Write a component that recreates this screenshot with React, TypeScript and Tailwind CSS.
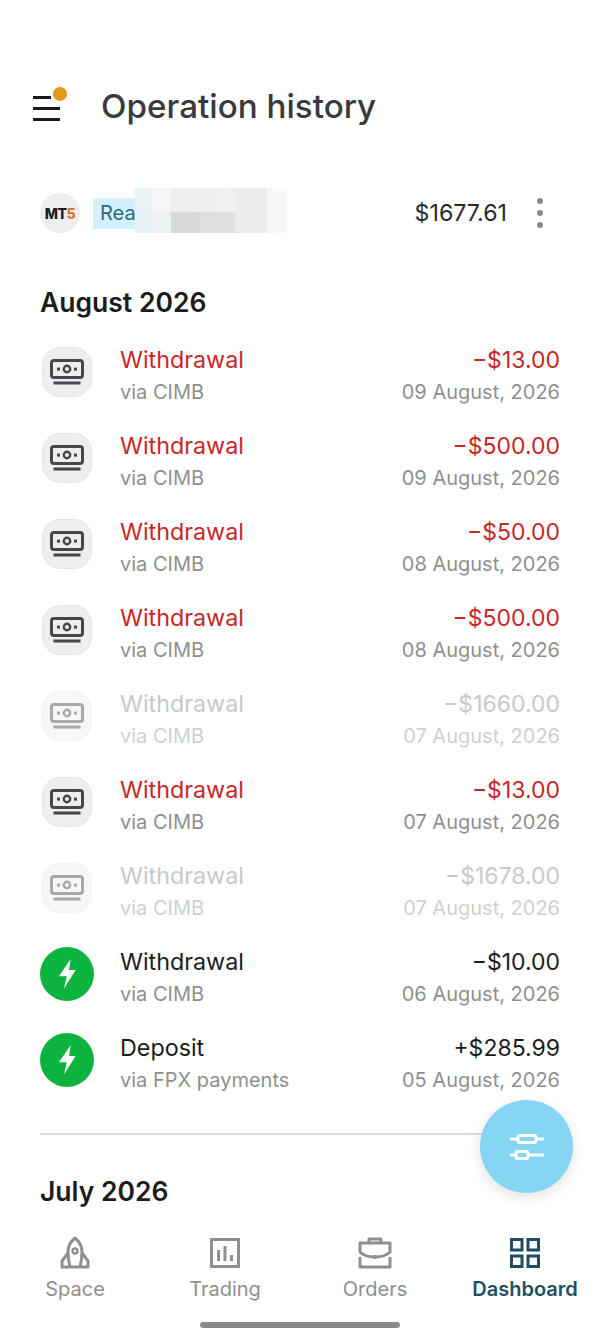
const ops = [
  { title: 'Withdrawal', via: 'via CIMB', amount: '−$13.00', date: '09 August, 2026', kind: 'failed' },
  { title: 'Withdrawal', via: 'via CIMB', amount: '−$500.00', date: '09 August, 2026', kind: 'failed' },
  { title: 'Withdrawal', via: 'via CIMB', amount: '−$50.00', date: '08 August, 2026', kind: 'failed' },
  { title: 'Withdrawal', via: 'via CIMB', amount: '−$500.00', date: '08 August, 2026', kind: 'failed' },
  { title: 'Withdrawal', via: 'via CIMB', amount: '−$1660.00', date: '07 August, 2026', kind: 'pending' },
  { title: 'Withdrawal', via: 'via CIMB', amount: '−$13.00', date: '07 August, 2026', kind: 'failed' },
  { title: 'Withdrawal', via: 'via CIMB', amount: '−$1678.00', date: '07 August, 2026', kind: 'pending' },
  { title: 'Withdrawal', via: 'via CIMB', amount: '−$10.00', date: '06 August, 2026', kind: 'done' },
  { title: 'Deposit', via: 'via FPX payments', amount: '+$285.99', date: '05 August, 2026', kind: 'done' },
]

// mosaic left over from the blurred account number
const blurTop = [
  { w: 'w-[16px]', c: 'bg-[#e8f3f8]' },
  { w: 'w-[20px]', c: 'bg-[#f3f5f6]' },
  { w: 'w-[46px]', c: 'bg-[#eeeeef]' },
  { w: 'w-[18px]', c: 'bg-[#f0f0f0]' },
  { w: 'w-[32px]', c: 'bg-[#ececec]' },
  { w: 'w-[20px]', c: 'bg-[#f8f8f8]' },
]
const blurBottom = [
  { w: 'w-[16px]', c: 'bg-[#e6f1f6]' },
  { w: 'w-[20px]', c: 'bg-[#eef1f2]' },
  { w: 'w-[28px]', c: 'bg-[#d9d9d9]' },
  { w: 'w-[18px]', c: 'bg-[#dedede]' },
  { w: 'w-[18px]', c: 'bg-[#e0e0e0]' },
  { w: 'w-[32px]', c: 'bg-[#ececec]' },
  { w: 'w-[20px]', c: 'bg-[#f8f8f8]' },
]

function CashIcon({ className }: { className: string }) {
  return (
    <svg viewBox="0 0 34 26" className={className} fill="none">
      <rect x="1.5" y="1.5" width="31" height="17" rx="2.5" stroke="currentColor" strokeWidth="3" />
      <circle cx="17" cy="10" r="3.2" stroke="currentColor" strokeWidth="2.4" />
      <rect x="7" y="8.6" width="3" height="3" fill="currentColor" />
      <rect x="24" y="8.6" width="3" height="3" fill="currentColor" />
      <rect x="3.5" y="22.5" width="27" height="3" fill="currentColor" />
    </svg>
  )
}

function OpRow({ op }: { op: (typeof ops)[number] }) {
  const pending = op.kind === 'pending'
  const titleColor = op.kind === 'failed' ? 'text-[#c62828]' : pending ? 'text-[#c9c9c9]' : 'text-[#1c1c1c]'
  const subColor = pending ? 'text-[#d0d0d0]' : 'text-[#8f8f8f]'
  return (
    <div className="flex h-[86px] items-start pt-[4px]">
      <div className="flex w-[80px] shrink-0">
        {op.kind === 'done' ? (
          <div className="mt-[1px] flex h-[54px] w-[54px] items-center justify-center rounded-full bg-[#0cb33f]">
            <svg viewBox="0 0 17 30" className="h-[30px] w-[17px]" fill="#fff">
              <path d="M11.7 0 0 17.3H7.7L5 29.5 16.7 11H10Z" />
            </svg>
          </div>
        ) : (
          <div
            className={`ml-[2px] mt-[3px] flex h-[50px] w-[50px] items-center justify-center rounded-[18px] border ${
              pending ? 'border-[#f3f3f4] bg-[#f7f7f8] text-[#a9a9a9]' : 'border-[#e6e6e9] bg-[#eeeef0] text-[#45474b]'
            }`}
          >
            <CashIcon className="h-[26px] w-[34px] shrink-0" />
          </div>
        )}
      </div>
      <div className="flex-1">
        <div className={`text-[23.3px] leading-[32px] ${titleColor}`}>{op.title}</div>
        <div className={`text-[20px] leading-[33px] ${subColor}`}>{op.via}</div>
      </div>
      <div className="text-right">
        <div className={`text-[23px] leading-[32px] ${titleColor}`}>{op.amount}</div>
        <div className={`text-[20px] leading-[33px] ${subColor}`}>{op.date}</div>
      </div>
    </div>
  )
}

function NavItem({ label, active, children }: { label: string; active?: boolean; children: React.ReactNode }) {
  return (
    <div className={`flex w-[150px] flex-col items-center ${active ? 'text-[#1f4e63]' : 'text-[#8f8f8f]'}`}>
      <div className="flex h-[32px] items-center justify-center">{children}</div>
      <div className={`mt-[7px] text-[20px] leading-[26px] ${active ? 'font-semibold' : ''}`}>{label}</div>
    </div>
  )
}

export default function App() {
  return (
    <div
      className="relative flex h-[1340px] w-[600px] flex-col overflow-hidden bg-white"
      style={{ fontFamily: 'Inter, "Noto Sans", sans-serif' }}
    >
      {/* Header */}
      <div className="mt-[82px] flex h-[50px] items-center pl-[33px]">
        <div className="relative h-[26px] w-[28px]">
          <div className="absolute left-0 top-[2px] h-[3px] w-[18px] bg-[#1a1a1a]" />
          <div className="absolute left-0 top-[13px] h-[3px] w-[27px] bg-[#1a1a1a]" />
          <div className="absolute left-0 top-[24px] h-[3px] w-[27px] bg-[#1a1a1a]" />
          <div className="absolute left-[20px] top-[-7px] h-[14px] w-[14px] rounded-full bg-[#e2981a]" />
        </div>
        <h1 className="ml-[40px] text-[33.2px] font-medium text-[#3a3a3c]">Operation history</h1>
      </div>

      {/* Account */}
      <div className="mt-[56px] flex h-[50px] items-center pl-[40px] pr-[57px]">
        <div className="flex h-[40px] w-[40px] items-center justify-center rounded-full bg-[#eeeef0] text-[14px] font-extrabold tracking-[-0.5px] text-[#1c1c1c]">
          MT<span className="text-[#e0702a]">5</span>
        </div>
        <div className="ml-[13px] flex h-[31px] w-[43px] items-center bg-[#d3f0fb] pl-[7px] text-[20px] text-[#2a6a85]">Rea</div>
        <div className="-ml-[1px] mb-[6px] flex h-[45px] flex-col">
          <div className="flex h-[24px]">
            {blurTop.map((b, i) => (
              <div key={i} className={`${b.w} ${b.c}`} />
            ))}
          </div>
          <div className="flex h-[21px]">
            {blurBottom.map((b, i) => (
              <div key={i} className={`${b.w} ${b.c}`} />
            ))}
          </div>
        </div>
        <div className="ml-auto text-[23.2px] text-[#2a2a2a]">$1677.61</div>
        <div className="ml-[30px] flex flex-col gap-[6px]">
          <div className="h-[6px] w-[6px] rounded-full bg-[#8a8a8a]" />
          <div className="h-[6px] w-[6px] rounded-full bg-[#8a8a8a]" />
          <div className="h-[6px] w-[6px] rounded-full bg-[#8a8a8a]" />
        </div>
      </div>

      {/* List */}
      <div className="flex-1 px-[40px]">
        <h2 className="mt-[46px] text-[26.5px] font-semibold leading-[36px] text-[#1c1c1c]">August 2026</h2>
        <div className="mt-[20px]">
          {ops.map((op, i) => (
            <OpRow key={i} op={op} />
          ))}
        </div>
        <div className="mt-[19px] h-[2px] bg-[#dcdcdc]" />
        <h2 className="mt-[38px] text-[26.5px] font-semibold leading-[36px] text-[#1c1c1c]">July 2026</h2>
      </div>

      {/* Filter button */}
      <div className="absolute left-[480px] top-[1100px] flex h-[93px] w-[93px] items-center justify-center rounded-full bg-[#86d6f3] shadow-[0_4px_14px_rgba(0,0,0,0.12)]">
        <svg viewBox="0 0 34 26" className="h-[26px] w-[34px]" fill="none" stroke="#fff" strokeWidth="3">
          <path d="M0 5H8M26 5H34M0 21H6M18 21H34" />
          <rect x="8" y="1.5" width="18" height="7" rx="2" />
          <rect x="6" y="17.5" width="12" height="7" rx="2" />
        </svg>
      </div>

      {/* Bottom nav */}
      <div className="absolute left-0 top-[1237px] flex w-[600px]">
        <NavItem label="Space">
          <svg viewBox="0 0 30 34" className="h-[34px] w-[30px]" fill="none" stroke="currentColor" strokeWidth="3" strokeLinejoin="round">
            <path d="M15 2C20 6 22 11 22 16C22 21 21 27 20 31H10C9 27 8 21 8 16C8 11 10 6 15 2Z" />
            <circle cx="15" cy="15" r="2.5" strokeWidth="2.4" />
            <path d="M8 17 2 25V31H9M22 17 28 25V31H21" />
          </svg>
        </NavItem>
        <NavItem label="Trading">
          <svg viewBox="0 0 30 30" className="h-[30px] w-[30px]" fill="none" stroke="currentColor" strokeWidth="3">
            <rect x="1.5" y="1.5" width="27" height="27" />
            <path d="M8.5 12V23M15 8V23M21.5 17V23" />
          </svg>
        </NavItem>
        <NavItem label="Orders">
          <svg viewBox="0 0 34 32" className="h-[32px] w-[34px]" fill="none" stroke="currentColor" strokeWidth="3" strokeLinejoin="round">
            <path d="M11 6V2H23V6" />
            <path d="M2 6H32V15C28 19 22 20 17 20C12 20 6 19 2 15Z" />
            <path d="M2 20V30H32V20" />
            <path d="M17 18V22" />
          </svg>
        </NavItem>
        <NavItem label="Dashboard" active>
          <svg viewBox="0 0 30 30" className="h-[30px] w-[30px]" fill="none" stroke="currentColor" strokeWidth="3">
            <rect x="1.5" y="1.5" width="10.5" height="10.5" />
            <rect x="18" y="1.5" width="10.5" height="10.5" />
            <rect x="1.5" y="18" width="10.5" height="10.5" />
            <rect x="18" y="18" width="10.5" height="10.5" />
          </svg>
        </NavItem>
      </div>

      {/* Home indicator */}
      <div className="absolute bottom-[12px] left-[200px] h-[6px] w-[200px] rounded-full bg-[#8a8a8a]" />
    </div>
  )
}
